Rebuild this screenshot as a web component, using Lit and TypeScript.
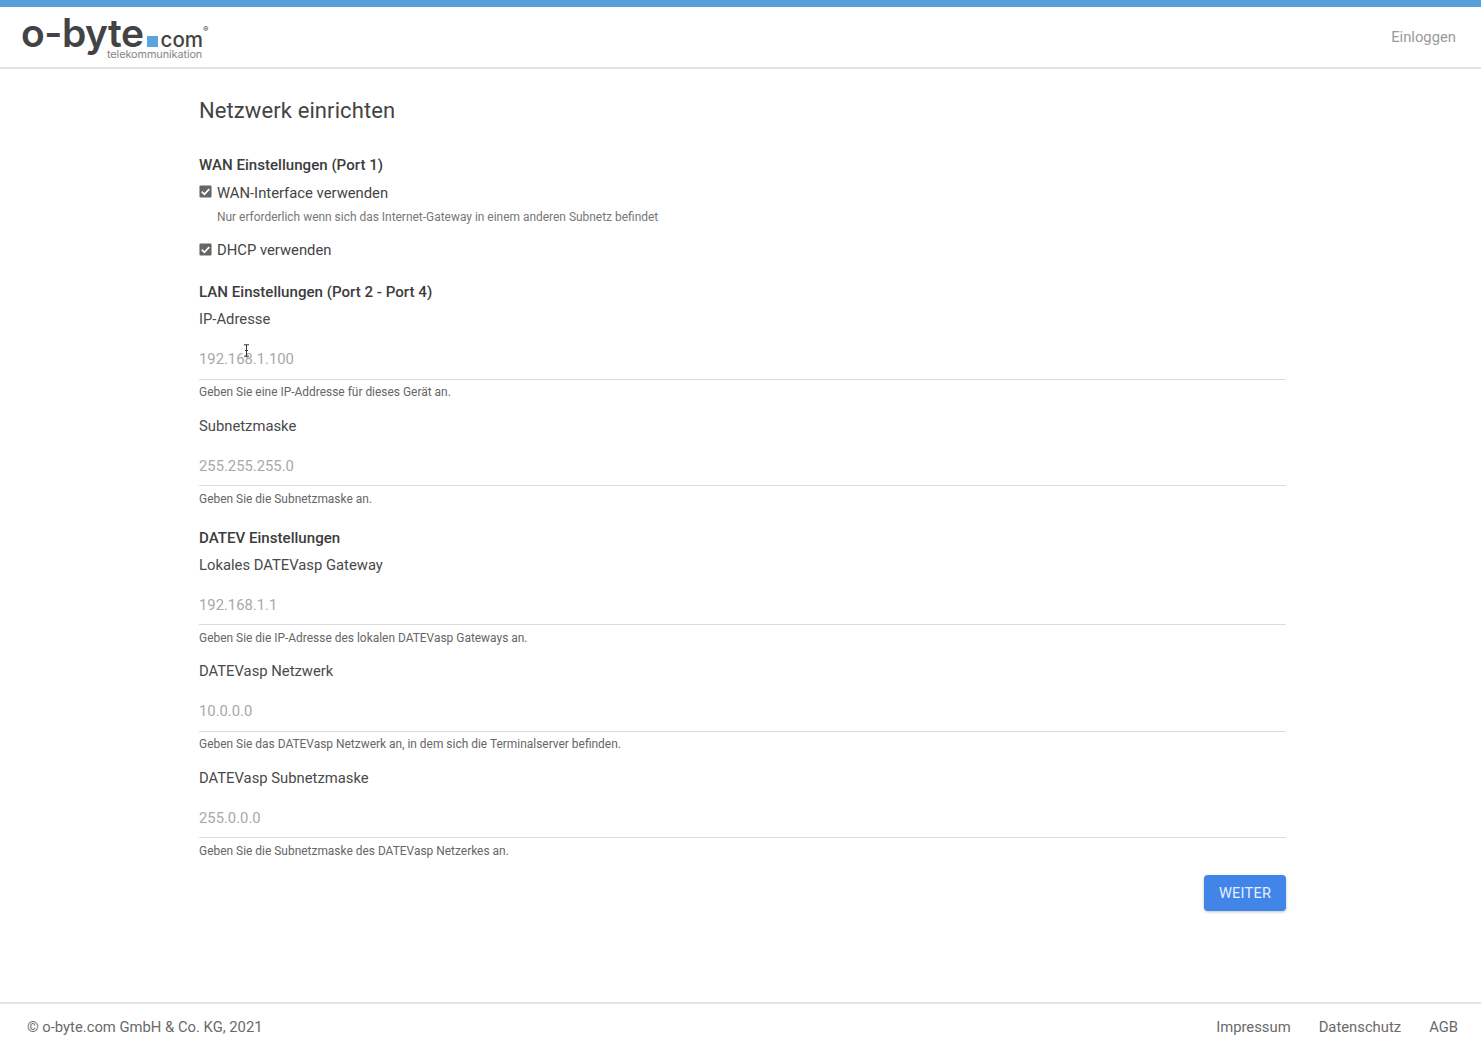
import { LitElement, html, css } from "lit";
import { customElement } from "lit/decorators.js";

const check = html`<svg class="cb" viewBox="0 0 14 14" aria-hidden="true"><rect width="13" height="13" x="0.5" y="0.5" rx="1.2" fill="#666"/><path d="M3 7.2l2.8 2.8L11 4.4" fill="none" stroke="#fff" stroke-width="1.9"/></svg>`;

@customElement("app-root")
export class AppRoot extends LitElement {
  static styles = css`
    :host { display: flex; flex-direction: column; height: 1047px; overflow: hidden; background: #fff; font-family: Roboto, "Liberation Sans", sans-serif; color: #444; font-size: 14.8px; position: relative; }
    .top { height: 7px; background: #5aa0d8; flex: none; }
    header { height: 60px; flex: none; border-bottom: 2px solid #e2e2e2; display: flex; align-items: center; justify-content: space-between; padding: 0 25px 0 21px; }
    .logo { font-family: Inter, "Liberation Sans", sans-serif; color: #434345; position: relative; height: 46px; width: 190px; }
    .logo-main { display: flex; align-items: baseline; line-height: 1; margin-top: -1px; }
    .ob { font-size: 39px; font-weight: 600; letter-spacing: -0.5px; }
    .sq { width: 11px; height: 11px; background: #5aa5dc; display: inline-block; margin: 0 3px 0 3px; }
    .com { font-size: 20.5px; font-weight: 500; letter-spacing: 0; }
    .reg { font-size: 8px; align-self: flex-start; margin-top: 12px; }
    .tele { position: absolute; left: 86px; top: 35px; font-size: 10.9px; color: #85858a; line-height: 1; letter-spacing: -0.1px; }
    .login { color: #9a9a9a; }
    main { flex: 1; padding: 0 195px 0 199px; display: flex; flex-direction: column; }
    h1 { font-size: 22px; font-weight: 400; margin: 27px 0 0; line-height: 30px; color: #444; letter-spacing: 0.1px; }
    h2 { font-size: 15.1px; font-weight: 500; margin: 0; line-height: 20px; color: #3c3c3c; }
    h2.first { margin-top: 29px; }
    h2.lan { margin-top: 22px; }
    h2.datev { margin-top: 21px; }
    .chk { display: flex; align-items: center; gap: 5px; height: 20px; margin-top: 7.5px; }
    .cb { width: 13px; height: 13px; flex: none; margin-top: -2px; }
    .chk.second { margin-top: 15.5px; }
    .sub { font-size: 11.95px; color: #777; line-height: 16px; margin: 6px 0 0 18px; }
    .field { display: flex; flex-direction: column; margin-top: 7px; }
    .field + .field { margin-top: 15.5px; }
    .lab { line-height: 20px; color: #4a4a4a; }
    .val { height: 50.5px; border-bottom: 1px solid #dcdcdc; color: #a8a8a8; display: flex; align-items: flex-end; line-height: 20px; padding-bottom: 9.5px; box-sizing: border-box; }
    .hint { font-size: 11.95px; color: #666; line-height: 16px; margin-top: 4.5px; }
    .act { display: flex; justify-content: flex-end; margin-top: 16px; }
    button { width: 82px; height: 36px; background: #4285e8; border: 0; border-radius: 4px; color: #e6f0ff; font: 400 14.6px Roboto, sans-serif; box-shadow: 0 1px 3px rgba(0,0,0,.25); letter-spacing: 0.2px; }
    footer { height: 41px; padding: 2px 23px 0 27px; flex: none; border-top: 2px solid #e4e4e4; display: flex; align-items: center; justify-content: space-between; color: #6a6a6a; }
    footer nav { display: flex; gap: 28px; }
    .cursor { position: absolute; left: 243px; top: 344px; width: 7px; height: 13px; }
  `;

  private field(label: string, value: string, hint: string) {
    return html`<div class="field"><div class="lab">${label}</div><div class="val">${value}</div><div class="hint">${hint}</div></div>`;
  }

  render() {
    return html`
      <div class="top"></div>
      <header>
        <div class="logo">
          <div class="logo-main"><span class="ob">o-byte</span><span class="sq"></span><span class="com">com</span><span class="reg">®</span></div>
          <div class="tele">telekommunikation</div>
        </div>
        <div class="login">Einloggen</div>
      </header>
      <main>
        <h1>Netzwerk einrichten</h1>
        <h2 class="first">WAN Einstellungen (Port 1)</h2>
        <div class="chk">${check}<span>WAN-Interface verwenden</span></div>
        <div class="sub">Nur erforderlich wenn sich das Internet-Gateway in einem anderen Subnetz befindet</div>
        <div class="chk second">${check}<span>DHCP verwenden</span></div>
        <h2 class="lan">LAN Einstellungen (Port 2 - Port 4)</h2>
        ${this.field("IP-Adresse", "192.168.1.100", "Geben Sie eine IP-Addresse für dieses Gerät an.")}
        ${this.field("Subnetzmaske", "255.255.255.0", "Geben Sie die Subnetzmaske an.")}
        <h2 class="datev">DATEV Einstellungen</h2>
        ${this.field("Lokales DATEVasp Gateway", "192.168.1.1", "Geben Sie die IP-Adresse des lokalen DATEVasp Gateways an.")}
        ${this.field("DATEVasp Netzwerk", "10.0.0.0", "Geben Sie das DATEVasp Netzwerk an, in dem sich die Terminalserver befinden.")}
        ${this.field("DATEVasp Subnetzmaske", "255.0.0.0", "Geben Sie die Subnetzmaske des DATEVasp Netzerkes an.")}
        <div class="act"><button>WEITER</button></div>
      </main>
      <footer>
        <div>© o-byte.com GmbH &amp; Co. KG, 2021</div>
        <nav><span>Impressum</span><span>Datenschutz</span><span>AGB</span></nav>
      </footer>
      <svg class="cursor" viewBox="0 0 7 13" aria-hidden="true"><path d="M1 .8h5M1 12.2h5M3.5 1v11M2 6.5h3" fill="none" stroke="#333" stroke-width="1"/></svg>
    `;
  }
}
